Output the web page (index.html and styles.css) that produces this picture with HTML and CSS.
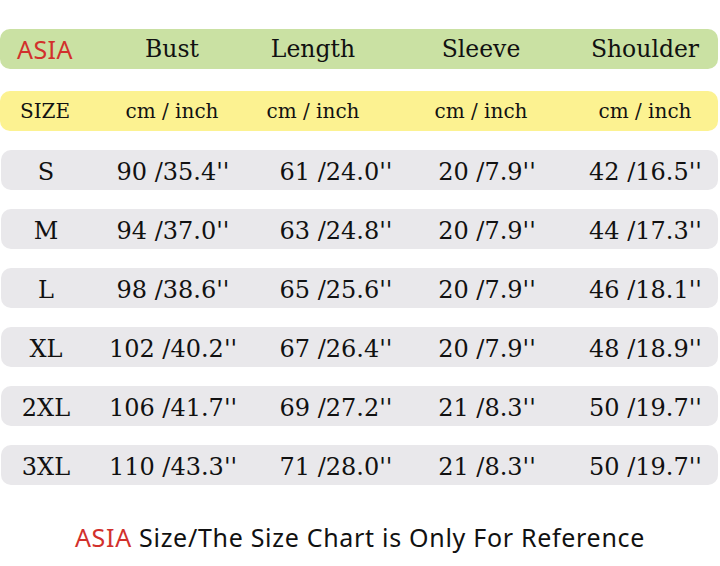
FILE: index.html
```html
<!DOCTYPE html>
<html>
<head>
<meta charset="utf-8">
<link rel="stylesheet" href="styles.css">
</head>
<body>
<div class="chart">
  <div class="bar head green">
    <div class="cell asia">ASIA</div>
    <div class="cell">Bust</div>
    <div class="cell">Length</div>
    <div class="cell">Sleeve</div>
    <div class="cell last">Shoulder</div>
  </div>
  <div class="bar head yellow">
    <div class="cell">SIZE</div>
    <div class="cell">cm / inch</div>
    <div class="cell">cm / inch</div>
    <div class="cell">cm / inch</div>
    <div class="cell last">cm / inch</div>
  </div>
  <div class="bar data">
    <div class="cell">S</div>
    <div class="cell">90 /35.4''</div>
    <div class="cell">61 /24.0''</div>
    <div class="cell">20 /7.9''</div>
    <div class="cell last">42 /16.5''</div>
  </div>
  <div class="bar data">
    <div class="cell">M</div>
    <div class="cell">94 /37.0''</div>
    <div class="cell">63 /24.8''</div>
    <div class="cell">20 /7.9''</div>
    <div class="cell last">44 /17.3''</div>
  </div>
  <div class="bar data">
    <div class="cell">L</div>
    <div class="cell">98 /38.6''</div>
    <div class="cell">65 /25.6''</div>
    <div class="cell">20 /7.9''</div>
    <div class="cell last">46 /18.1''</div>
  </div>
  <div class="bar data">
    <div class="cell">XL</div>
    <div class="cell">102 /40.2''</div>
    <div class="cell">67 /26.4''</div>
    <div class="cell">20 /7.9''</div>
    <div class="cell last">48 /18.9''</div>
  </div>
  <div class="bar data">
    <div class="cell">2XL</div>
    <div class="cell">106 /41.7''</div>
    <div class="cell">69 /27.2''</div>
    <div class="cell">21 /8.3''</div>
    <div class="cell last">50 /19.7''</div>
  </div>
  <div class="bar data">
    <div class="cell">3XL</div>
    <div class="cell">110 /43.3''</div>
    <div class="cell">71 /28.0''</div>
    <div class="cell">21 /8.3''</div>
    <div class="cell last">50 /19.7''</div>
  </div>
  <p class="note"><span class="red">ASIA</span> Size/The Size Chart is Only For Reference</p>
</div>
</body>
</html>
```
FILE: styles.css
```css
html, body {
  margin: 0;
  padding: 0;
  background: #ffffff;
}
body {
  width: 720px;
  height: 566px;
  overflow: hidden;
  font-family: "DejaVu Serif", "Liberation Serif", serif;
  color: #111111;
}
.chart {
  display: flex;
  flex-direction: column;
  padding-top: 29px;
}
.bar {
  display: grid;
  height: 40px;
  align-items: center;
  border-radius: 10px;
}
.head {
  grid-template-columns: 90px 164px 118px 218px 1fr;
  width: 718px;
}
.head .last {
  padding-right: 18px;
}
.green {
  background: #cae1a3;
  font-size: 23.5px;
}
.yellow {
  background: #fcf291;
  margin-top: 22px;
  font-size: 20px;
}
.data {
  grid-template-columns: 90px 164px 162px 140px 1fr;
  background: #e9e8eb;
  margin-left: 1px;
  width: 717px;
  margin-top: 19px;
  font-size: 24px;
  padding-top: 4px;
  height: 36px;
}
.data .last {
  padding-left: 16px;
}
.cell {
  text-align: center;
  white-space: nowrap;
}
.asia {
  color: #d2302c;
  font-family: "Noto Sans", sans-serif;
  font-size: 25px;
  letter-spacing: 0.5px;
}
.note {
  margin: 35px 0 0;
  text-align: center;
  font-family: "Noto Sans", sans-serif;
  font-size: 25px;
  letter-spacing: 0.7px;
  color: #111111;
}
.red {
  color: #d2302c;
}
```
